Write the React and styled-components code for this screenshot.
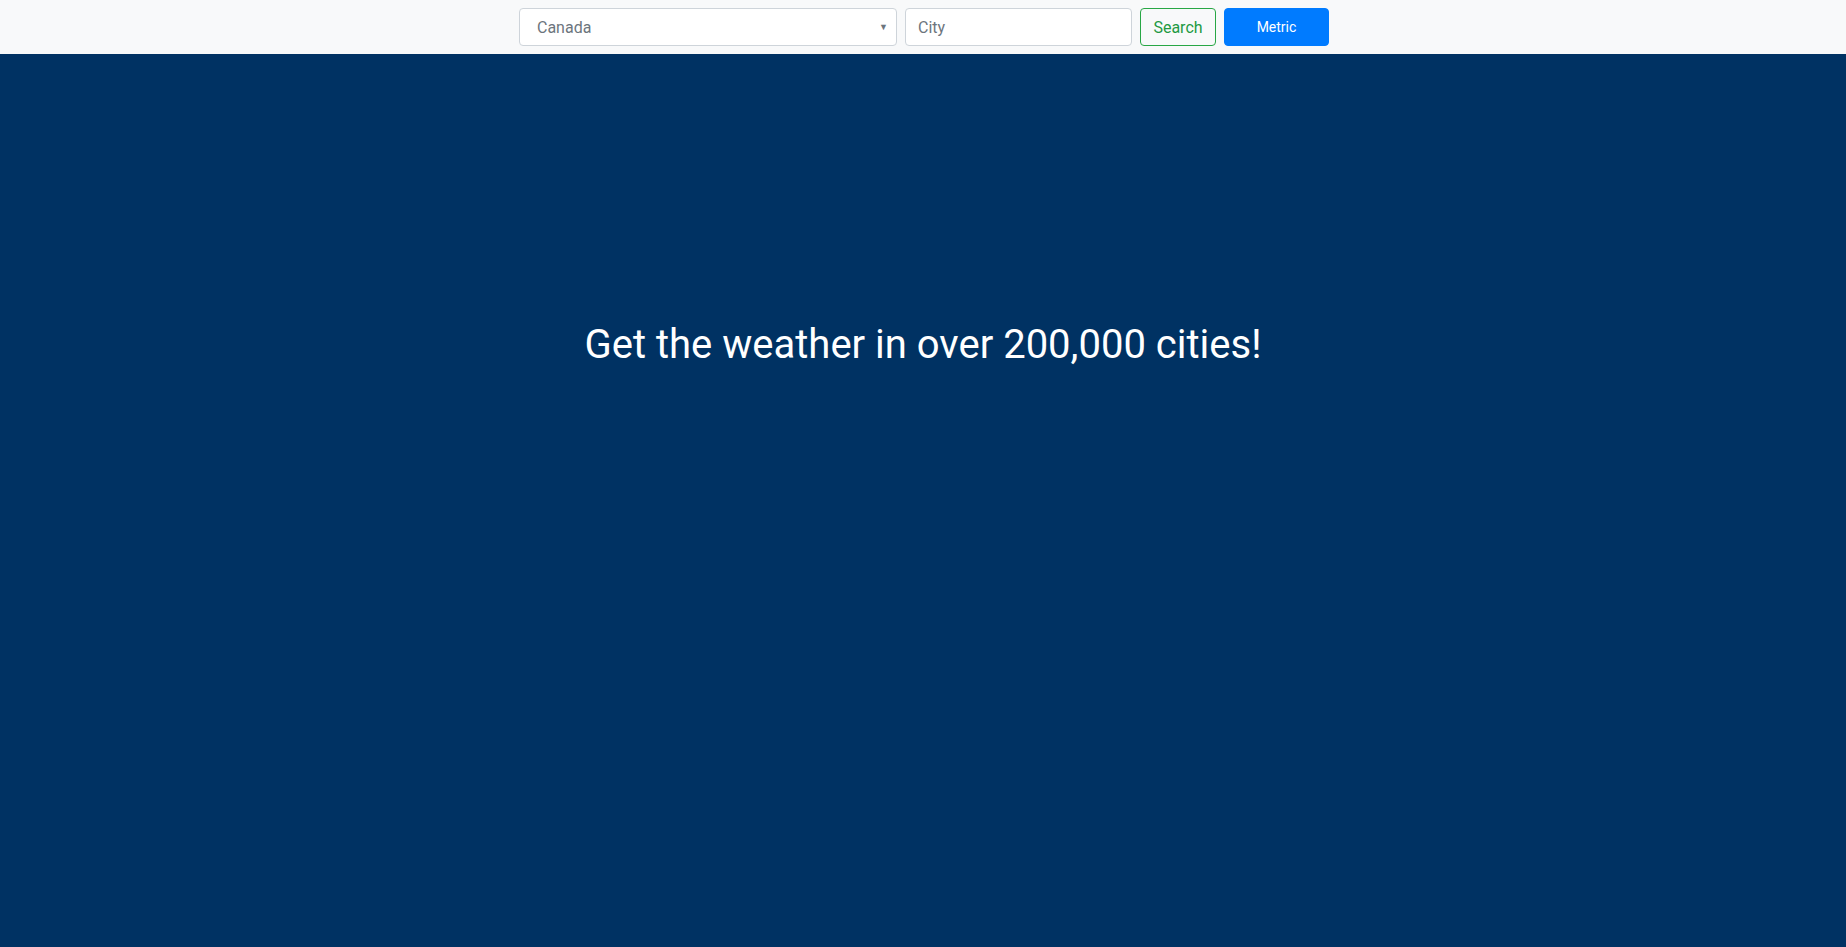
import styled, { createGlobalStyle } from 'styled-components';

const GlobalStyle = createGlobalStyle`
	html, body {
		margin: 0;
		padding: 0;
		height: 100%;
		overflow: hidden;
	}
	body {
		font-family: Roboto, "Liberation Sans", sans-serif;
		background: #003263;
	}
	* {
		box-sizing: border-box;
	}
`;

const Page = styled.div`
	display: flex;
	flex-direction: column;
	height: 100vh;
	background: #003263;
`;

const Toolbar = styled.form`
	display: flex;
	justify-content: center;
	align-items: center;
	gap: 8px;
	height: 54px;
	padding: 8px 0 8px 2px;
	background: #f8f9fa;
`;

const SelectBox = styled.div`
	position: relative;
	width: 378px;
	height: 38px;

	& select {
		appearance: none;
		width: 100%;
		height: 100%;
		padding: 0 28px 0 17px;
		font-family: inherit;
		font-size: 16px;
		color: #6c757d;
		background: #fff;
		border: 1px solid #ced4da;
		border-radius: 4px;
	}

	& .caret {
		position: absolute;
		top: 50%;
		right: 9px;
		transform: translateY(-50%);
		pointer-events: none;
		font-size: 9px;
		color: #6c757d;
	}
`;

const Input = styled.input`
	width: 227px;
	height: 38px;
	padding: 0 12px;
	font-family: inherit;
	font-size: 16px;
	color: #495057;
	background: #fff;
	border: 1px solid #ced4da;
	border-radius: 4px;

	&::placeholder {
		color: #6c757d;
	}
`;

const Button = styled.button`
	height: 38px;
	width: ${({ $width }) => $width};
	padding: 0;
	font-family: inherit;
	font-size: ${({ $primary }) => ($primary ? '14px' : '16px')};
	color: ${({ $primary }) => ($primary ? '#fff' : '#1e9a43')};
	background: ${({ $primary }) => ($primary ? '#007bff' : 'transparent')};
	border: 1px solid ${({ $primary }) => ($primary ? '#007bff' : '#28a745')};
	border-radius: 4px;
	cursor: pointer;
`;

const Hero = styled.main`
	flex: 1;
	display: flex;
	justify-content: center;
	padding-top: 267px;
`;

const Title = styled.h1`
	margin: 0;
	font-size: 40px;
	font-weight: 400;
	line-height: 1.2;
	color: #fff;
`;

export default function App() {
	return (
		<>
			<GlobalStyle />
			<Page>
				<Toolbar onSubmit={(e) => e.preventDefault()}>
					<SelectBox>
						<select defaultValue="CA">
							<option value="CA">Canada</option>
							<option value="US">United States</option>
						</select>
						<span className="caret">▼</span>
					</SelectBox>
					<Input placeholder="City" />
					<Button $width="76px">Search</Button>
					<Button $width="105px" $primary type="button">
						Metric
					</Button>
				</Toolbar>
				<Hero>
					<Title>Get the weather in over 200,000 cities!</Title>
				</Hero>
			</Page>
		</>
	);
}
